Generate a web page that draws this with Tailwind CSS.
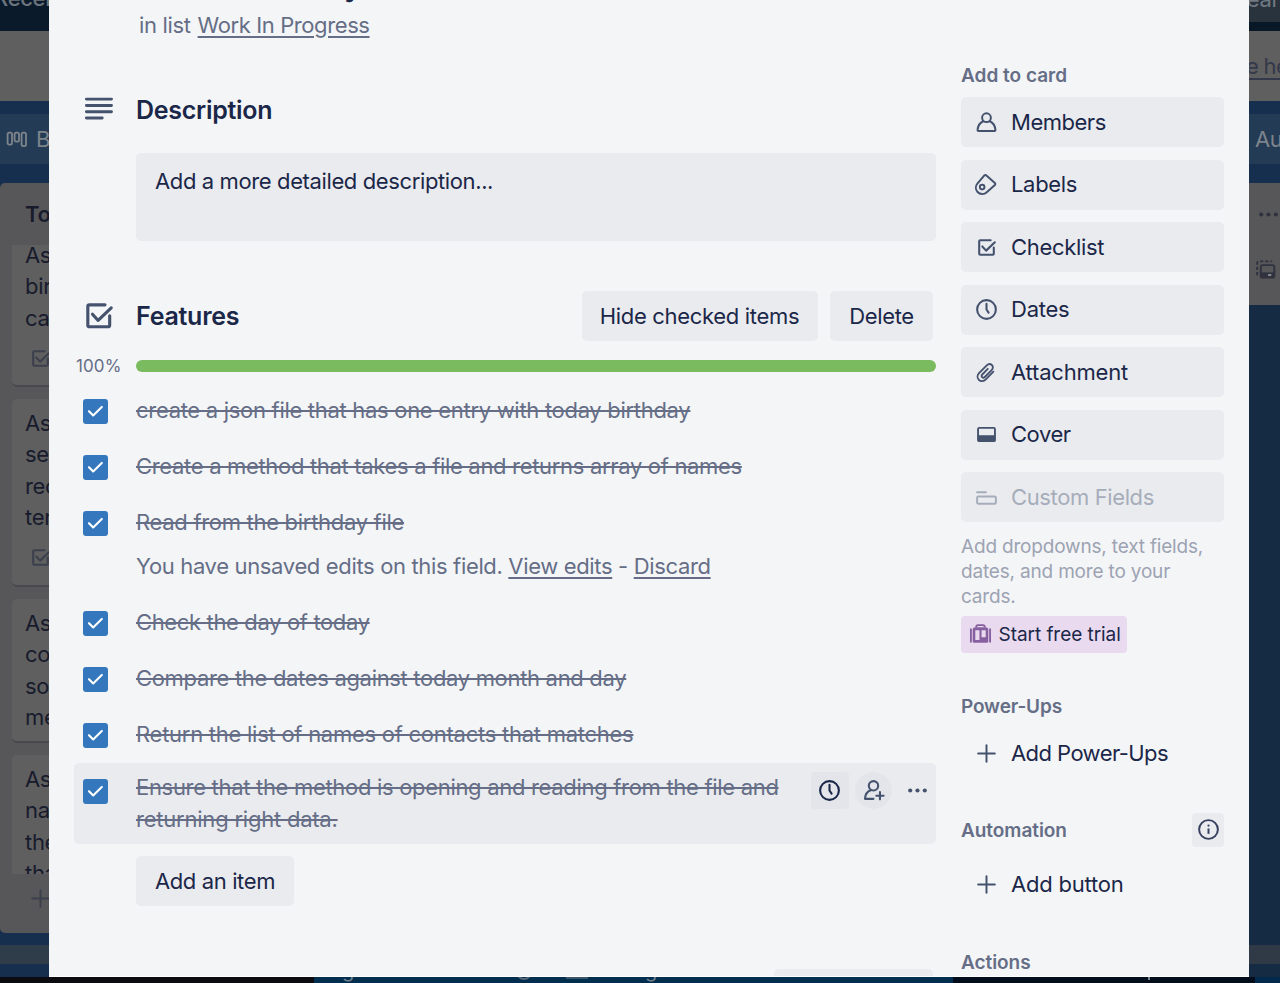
<!DOCTYPE html>
<html lang="en">
<head>
<meta charset="utf-8">
<title>Card - Work In Progress</title>
<script src="https://cdn.jsdelivr.net/npm/@tailwindcss/browser@4"></script>
</head>
<body class="w-[1280px] h-[983px] overflow-hidden bg-[#0b0b10] font-['Inter','Liberation_Sans',sans-serif] text-[22px] tracking-[-0.32px] text-[#1b2748]">
<svg class="hidden">
  <symbol id="check" viewBox="0 0 24 24"><g fill="none" stroke="currentColor" stroke-width="2" stroke-linecap="round" stroke-linejoin="round"><path d="M16 5H6a1 1 0 0 0-1 1v12a1 1 0 0 0 1 1h12a1 1 0 0 0 1-1v-6"/><path d="M8 11l3.6 4L20 7"/></g></symbol>
  <symbol id="tick" viewBox="0 0 25 25"><path d="M6 12.2l4.2 4.3 8.6-8.6" fill="none" stroke="#fff" stroke-width="2.1" stroke-linecap="round" stroke-linejoin="round"/></symbol>
  <symbol id="clock" viewBox="0 0 24 24"><g fill="none" stroke="currentColor" stroke-width="2" stroke-linecap="round" stroke-linejoin="round"><circle cx="12" cy="12" r="9"/><path d="M12 6.500v5.500l2 3"/></g></symbol>
  <symbol id="plus" viewBox="0 0 24 24"><path d="M12 4v16M4 12h16" fill="none" stroke="currentColor" stroke-width="1.9" stroke-linecap="round"/></symbol>
  <symbol id="dots" viewBox="0 0 24 24"><g fill="currentColor"><circle cx="5" cy="12" r="2"/><circle cx="12" cy="12" r="2"/><circle cx="19" cy="12" r="2"/></g></symbol>
</svg>

<div class="flex h-[977px]">
  <!-- board, left of the dialog -->
  <div class="w-[49px] shrink-0 overflow-hidden bg-[#172f4e] text-[#171b2c]">
    <div class="h-[31px] overflow-hidden bg-[#0a1a2b]"><div class="-mt-[13px] -ml-[6px] leading-[22px] font-medium text-[#6b747c] whitespace-nowrap">Recent</div></div>
    <div class="h-[70px] bg-[#5f5f5f]"></div>
    <div class="h-[82px] pt-[13px]">
      <div class="h-[50px] bg-[#243b55] flex items-center pl-[6px] gap-[8px] text-[#7d848b] whitespace-nowrap">
        <svg class="w-[22px] h-[22px] shrink-0" viewBox="0 0 22 22" fill="none" stroke="currentColor" stroke-width="1.8"><rect x="1.6" y="4.700" width="4.4" height="12" rx="1.6"/><rect x="8.6" y="4.700" width="4.4" height="9" rx="1.6"/><rect x="15.6" y="4.700" width="4.4" height="13.500" rx="1.6"/></svg>
        <span>Board</span>
      </div>
    </div>
    <div class="h-[750px] rounded-l-[5px] bg-[#575759] whitespace-nowrap overflow-hidden">
      <div class="h-[62px] flex items-center pl-[25px] font-semibold">To Do</div>
      <div class="ml-[12px] h-[629px] overflow-hidden leading-[31.25px]">
        <div class="flow-root h-[142px] bg-[#5f5f60] pl-[13px] rounded-bl-[5px] border-b-2 border-[#48494d]">
          <div class="-mt-[5px]"><div>As a</div><div>birthday</div><div>card</div></div>
          <svg class="w-[25px] h-[25px] mt-[12px] ml-[3px] text-[#3b404c]"><use href="#check"/></svg>
        </div>
        <div class="mt-[12px] h-[188px] bg-[#5f5f60] pl-[13px] pt-[9px] rounded-l-[5px] border-b-2 border-[#48494d]">
          <div>As a</div><div>send</div><div>record</div><div>tenant</div>
          <svg class="w-[25px] h-[25px] mt-[12px] ml-[3px] text-[#3b404c]"><use href="#check"/></svg>
        </div>
        <div class="mt-[12px] h-[144px] bg-[#5f5f60] pl-[13px] pt-[9px] rounded-l-[5px] border-b-2 border-[#48494d]">
          <div>As a</div><div>contact</div><div>so that</div><div>message</div>
        </div>
        <div class="mt-[12px] h-[144px] bg-[#5f5f60] pl-[13px] pt-[9px] rounded-l-[5px]">
          <div>As a</div><div>name</div><div>then</div><div>that</div>
        </div>
      </div>
      <div class="pt-[12px] pl-[28px]"><svg class="w-[25px] h-[25px] text-[#3b404c]"><use href="#plus"/></svg></div>
    </div>
    <div class="h-[12px]"></div>
    <div class="h-[19px] bg-[#2f3c4a]"></div>
  </div>

  <!-- card dialog -->
  <main class="w-[1200px] shrink-0 h-[977px] overflow-hidden bg-[#f4f5f7] border-b border-white pl-[25px] flex gap-[25px]">
    <section class="w-[862px] shrink-0">
      <div class="h-[10px] overflow-hidden"><div class="-mt-[31px] pl-[270px] text-[31px] leading-none font-semibold">y</div></div>
      <div class="h-[30px] flex items-center pl-[65px] text-[#656e86]"><span>in list&nbsp;<a class="ml-[1px] tracking-[-0.400px] underline underline-offset-[3px] decoration-[1.5px]">Work In Progress</a></span></div>

      <div class="mt-[50px] h-[40px] flex items-center">
        <svg class="w-[38px] h-[38px] ml-[5.500px] mr-[18.500px] text-[#44526d]" viewBox="0 0 38 38" stroke="currentColor" stroke-width="2.9" stroke-linecap="round"><path d="M6.4 8.1h25.1M6.4 14.500h25.1M6.4 20.7h25.1M6.4 27h15.8"/></svg>
        <h3 class="pt-[2px] text-[25px] font-semibold tracking-[-0.28px]">Description</h3>
      </div>
      <div class="ml-[62px] mt-[23px] h-[87.5px] rounded-[5px] bg-[#eaebef] px-[19px] pt-[13px] leading-[31px] tracking-[-0.38px]">Add a more detailed description...</div>

      <div class="mt-[50.5px] h-[50px] flex items-center">
        <svg class="w-[37.5px] h-[37.5px] ml-[6px] mr-[18.5px] -mt-[1px] text-[#44526d]"><use href="#check"/></svg>
        <h3 class="pt-[1px] text-[25px] font-semibold tracking-[-0.25px]">Features</h3>
        <div class="ml-auto mr-[3px] flex gap-[12.5px]">
          <button class="h-[50px] w-[236px] rounded-[5px] bg-[#eaebef]">Hide checked items</button>
          <button class="h-[50px] w-[103px] rounded-[5px] bg-[#eaebef]">Delete</button>
        </div>
      </div>
      <div class="mt-[12px] h-[26px] flex items-center">
        <span class="w-[62px] pl-[2px] pt-[1px] text-[17px] tracking-[0.1px] text-[#656e86]">100%</span>
        <div class="flex-1 h-[12.5px] rounded-full bg-[#7abb5f]"></div>
      </div>

      <ul class="mt-[3px] text-[#656e86] leading-[31.25px]">
        <li class="h-[56.25px] flex pl-[9px]"><svg class="w-[25px] h-[25px] mt-[16.5px] mr-[28px] rounded-[3px] bg-[#3577bc]"><use href="#tick"/></svg><span class="pt-[12.600px] tracking-[-0.300px] line-through decoration-[1.5px]">create a json file that has one entry with today birthday</span></li>
        <li class="h-[56.25px] flex pl-[9px]"><svg class="w-[25px] h-[25px] mt-[16.5px] mr-[28px] rounded-[3px] bg-[#3577bc]"><use href="#tick"/></svg><span class="pt-[12.600px] line-through decoration-[1.5px]">Create a method that takes a file and returns array of names</span></li>
        <li class="h-[100px] flex pl-[9px]"><svg class="w-[25px] h-[25px] mt-[16.5px] mr-[28px] rounded-[3px] bg-[#3577bc]"><use href="#tick"/></svg><div class="pt-[12px]"><p class="tracking-[-0.300px] line-through decoration-[1.5px]">Read from the birthday file</p><p class="mt-[12.800px] tracking-[-0.345px]">You have unsaved edits on this field. <a class="underline underline-offset-[3px] decoration-[1.5px]">View edits</a> - <a class="underline underline-offset-[3px] decoration-[1.5px]">Discard</a></p></div></li>
        <li class="h-[56.25px] flex pl-[9px]"><svg class="w-[25px] h-[25px] mt-[16.5px] mr-[28px] rounded-[3px] bg-[#3577bc]"><use href="#tick"/></svg><span class="pt-[12px] tracking-[-0.360px] line-through decoration-[1.5px]">Check the day of today</span></li>
        <li class="h-[56.25px] flex pl-[9px]"><svg class="w-[25px] h-[25px] mt-[16.5px] mr-[28px] rounded-[3px] bg-[#3577bc]"><use href="#tick"/></svg><span class="pt-[12px] line-through decoration-[1.5px]">Compare the dates against today month and day</span></li>
        <li class="h-[56.25px] flex pl-[9px]"><svg class="w-[25px] h-[25px] mt-[16.250px] mr-[28px] rounded-[3px] bg-[#3577bc]"><use href="#tick"/></svg><span class="pt-[12px] tracking-[-0.260px] line-through decoration-[1.5px]">Return the list of names of contacts that matches</span></li>
        <li class="h-[80.500px] flex pl-[9px] rounded-[5px] bg-[#eaebef]">
          <svg class="w-[25px] h-[25px] mt-[16px] mr-[28px] shrink-0 rounded-[3px] bg-[#3577bc]"><use href="#tick"/></svg>
          <p class="w-[675px] pt-[9px] line-through decoration-[1.5px]"><span class="tracking-[-0.310px]">Ensure that the method is opening and reading from the file and</span><br><span class="tracking-[-0.220px]">returning right data.</span></p>
          <div class="mt-[8.500px] flex h-[37.5px] items-center text-[#44526d]">
            <span class="w-[37.5px] h-[37.5px] rounded-[4px] bg-[#e4e5ea] flex items-center justify-center text-[#1b2748]"><svg class="w-[25px] h-[25px]"><use href="#clock"/></svg></span>
            <span class="ml-[6px] w-[37.5px] h-[37.5px] rounded-full bg-[#e4e5ea] flex items-center justify-center"><svg class="w-[25px] h-[25px]" viewBox="0 0 24 24" fill="none" stroke="currentColor" stroke-width="2" stroke-linecap="round" stroke-linejoin="round"><circle cx="12" cy="7.5" r="4.5"/><path d="M9.5 11.8C5.800 13 4 16 3.800 20H12M18.200 13.500v7M14.700 17h7"/></svg></span>
            <svg class="ml-[12.5px] w-[25px] h-[25px]"><use href="#dots"/></svg>
          </div>
        </li>
      </ul>
      <button class="ml-[62px] mt-[12.500px] block h-[50px] w-[158px] rounded-[5px] bg-[#eaebef] tracking-[-0.38px]">Add an item</button>
      <div class="ml-[700px] mt-[63px] h-[50px] w-[159px] rounded-[5px] bg-[#eaebef]"></div>
    </section>

    <aside class="w-[263px] shrink-0 pt-[60px]">
      <h4 class="h-[30px] pt-[2px] flex items-center text-[19px] font-semibold tracking-[0px] text-[#656e86]">Add to card</h4>
      <div class="mt-[7px] flex flex-col gap-[12.5px]">
        <a class="h-[50px] rounded-[5px] bg-[#eaebef] flex items-center pl-[12.5px] gap-[12.5px] tracking-[-0.480px]"><svg class="w-[25px] h-[25px] text-[#44526d]" viewBox="0 0 24 24" fill="none" stroke="currentColor" stroke-width="1.9" stroke-linecap="round" stroke-linejoin="round"><circle cx="12" cy="7.400" r="4.200"/><path d="M8.900 10.800C5.500 12.200 3.800 15 3.400 19.200a.8.8 0 0 0 .8.900h15.600a.8.8 0 0 0 .8-.9C20.200 15 18.500 12.200 15.100 10.800"/></svg>Members</a>
        <a class="h-[50px] rounded-[5px] bg-[#eaebef] flex items-center pl-[12px] gap-[13px]"><svg class="w-[25px] h-[25px] text-[#44526d]" viewBox="0 0 24 24" fill="none" stroke="currentColor" stroke-width="1.9" stroke-linejoin="round"><path d="M4.200 11.100L10.900 3.300a1.400 1.400 0 0 1 2 0L21 10.500a1.400 1.400 0 0 1 0 2L13.200 19.500A6.100 6.100 0 0 1 4.400 19.200A6.100 6.100 0 0 1 4.200 11.100z"/><circle cx="8.800" cy="14.500" r="2.200"/></svg>Labels</a>
        <a class="h-[50px] rounded-[5px] bg-[#eaebef] flex items-center pl-[12.5px] gap-[12.5px]"><svg class="w-[25px] h-[25px] text-[#44526d]"><use href="#check"/></svg>Checklist</a>
        <a class="h-[50px] rounded-[5px] bg-[#eaebef] flex items-center pl-[12.5px] gap-[12.5px] tracking-[-0.250px]"><svg class="w-[25px] h-[25px] text-[#44526d]"><use href="#clock"/></svg>Dates</a>
        <a class="h-[50px] rounded-[5px] bg-[#eaebef] flex items-center pl-[12px] gap-[13px] tracking-[-0.19px]"><svg class="w-[25px] h-[25px] text-[#44526d]" viewBox="0 0 24 24" fill="none" stroke="currentColor" stroke-width="1.8" stroke-linecap="round" stroke-linejoin="round"><path d="M19.600 11.200l-7.300 7.400c-2 2-4.900 2.200-6.700.4s-1.600-4.700.4-6.700l7.200-7.200c1.400-1.400 3.500-1.600 4.900-.3s1.200 3.500-.2 4.900l-6.600 6.600c-.8.800-1.900.8-2.600.1s-.6-1.700.2-2.500l5.300-5.400"/></svg>Attachment</a>
        <a class="h-[50px] rounded-[5px] bg-[#eaebef] flex items-center pl-[12.5px] gap-[12.5px] tracking-[-0.450px]"><svg class="w-[25px] h-[25px] text-[#44526d]" viewBox="0 0 24 24"><rect x="3.900" y="5.600" width="16.200" height="12.800" rx="1.200" fill="none" stroke="currentColor" stroke-width="1.800"/><path d="M3.500 12.700h17v5.800h-17z" fill="currentColor"/></svg>Cover</a>
        <a class="h-[50px] rounded-[5px] bg-[#eaebef] flex items-center pl-[12.5px] gap-[12.5px] tracking-[-0.38px] text-[#a6adba]"><svg class="w-[25px] h-[25px]" viewBox="0 0 24 24" fill="none" stroke="currentColor" stroke-width="1.900" stroke-linecap="round"><path d="M3 7h8.500"/><rect x="3" y="11" width="18" height="7" rx="1.300"/></svg>Custom Fields</a>
      </div>
      <p class="mt-[12px] text-[19px] leading-[25px] tracking-[-0.18px] text-[#9ca3b2]">Add dropdowns, text fields,<br>dates, and more to your<br>cards.</p>
      <a class="mt-[7px] h-[37px] w-[166px] rounded-[4px] bg-[#e9daf0] flex items-center pl-[6.500px] text-[19px] tracking-[-0.05px]"><svg class="w-[25px] h-[25px] mr-[6px] text-[#87619f]" viewBox="0 0 24 24" fill="none" stroke="currentColor"><path d="M2.800 7v12M21.200 7v12" stroke-width="1.800" stroke-linecap="round"/><path d="M8 5V4.500A1.500 1.500 0 0 1 9.500 3h5A1.500 1.500 0 0 1 16 4.500V5" stroke-width="1.900"/><path fill="currentColor" stroke="none" fill-rule="evenodd" d="M7 5h10a2.500 2.500 0 0 1 2.500 2.500v11A1.500 1.500 0 0 1 18 20H6a1.500 1.500 0 0 1-1.500-1.500v-11A2.500 2.500 0 0 1 7 5zM7 8v9.200h4V8zM13 8v6.700h4V8z"/></svg><span class="pt-[2px]">Start free trial</span></a>

      <h4 class="mt-[38px] h-[30px] pt-[2px] flex items-center text-[19px] font-semibold tracking-[-0.14px] text-[#656e86]">Power-Ups</h4>
      <a class="mt-[7.500px] h-[50px] flex items-center pl-[12.5px] gap-[12.5px] tracking-[-0.57px]"><svg class="w-[25px] h-[25px] text-[#44526d]"><use href="#plus"/></svg>Add Power-Ups</a>
      <div class="mt-[34px] h-[34px] flex items-center justify-between">
        <h4 class="pt-[4px] text-[19px] font-semibold tracking-[-0.05px] text-[#656e86]">Automation</h4>
        <span class="w-[32px] h-[34px] rounded-[4px] bg-[#eaebef] flex items-center justify-center"><svg class="w-[25px] h-[25px] text-[#37415f]" viewBox="0 0 24 24"><circle cx="12" cy="12" r="9" fill="none" stroke="currentColor" stroke-width="1.900"/><circle cx="12" cy="8.200" r="1.100" fill="currentColor"/><path d="M12 11v5.200" stroke="currentColor" stroke-width="1.900"/></svg></span>
      </div>
      <a class="mt-[12.500px] h-[50px] flex items-center pl-[12.5px] gap-[12.5px] tracking-[-0.2px]"><svg class="w-[25px] h-[25px] text-[#44526d]"><use href="#plus"/></svg>Add button</a>
      <h4 class="mt-[38px] h-[30px] pt-[2px] flex items-center text-[19px] font-semibold tracking-[-0.05px] text-[#656e86]">Actions</h4>
    </aside>
  </main>

  <!-- board, right of the dialog -->
  <div class="flex-1 overflow-hidden bg-[#152b44] whitespace-nowrap">
    <div class="h-[22px] bg-[#28333e] overflow-hidden"><div class="-mt-[12px] -ml-[16px] leading-[22px] text-[#717982]">Search</div></div>
    <div class="h-[9px] bg-[#081827]"></div>
    <div class="h-[70px] bg-[#5f5f5f] flex items-center text-[#33384a]"><span class="-ml-[3px] tracking-[-0.700px] underline underline-offset-[4px] decoration-[1.5px]">e here</span></div>
    <div class="h-[82px] pt-[13px] bg-[#172f4e]"><div class="h-[50px] bg-[#243b55] flex items-center pl-[6px] text-[#7d848b]">Automation</div></div>
    <div class="h-[122px] bg-[#575759] text-[#30333f] pt-[19px]">
      <svg class="w-[25px] h-[25px] ml-[7px]"><use href="#dots"/></svg>
      <svg class="w-[25px] h-[25px] ml-[4px] mt-[30px]" viewBox="0 0 24 24" fill="none" stroke="currentColor" stroke-width="1.900"><path d="M4 17.500V6A1.800 1.800 0 0 1 5.800 4.200H18.500" stroke-dasharray="3.200 1.800"/><rect x="7.500" y="7.800" width="13" height="12" rx="1.800"/><path d="M7.500 14.800h13v5h-13z" fill="currentColor" stroke="none"/><path d="M14.500 17.300h3" stroke="#8a8b8d"/></svg>
    </div>
    <div class="h-[640px]"></div>
    <div class="h-[19px] bg-[#303a46]"></div>
  </div>
</div>

<!-- wallpaper strip under the window -->
<div class="h-[6px] flex overflow-hidden text-[20px] leading-[20px] text-[#71818e]">
  <div class="w-[314px] bg-[#0b0b10]"></div>
  <div class="w-[639px] bg-[#012d4e] flex">
    <span class="ml-[28px] -mt-[17px]">g</span>
    <i class="ml-[162px] -mt-[13px] size-[16px] rounded-full border-2 border-[#55697a]"></i>
    <i class="ml-[34px] w-[22px] h-[2px] bg-[#3b566c]"></i>
    <span class="ml-[57px] -mt-[17px]">g</span>
  </div>
  <div class="w-[302px] bg-[#010d1b] flex"><i class="ml-[195px] w-[2px] h-[3px] bg-[#71818e]"></i></div>
  <div class="flex-1 bg-[#022a4c]"></div>
</div>
</body>
</html>
